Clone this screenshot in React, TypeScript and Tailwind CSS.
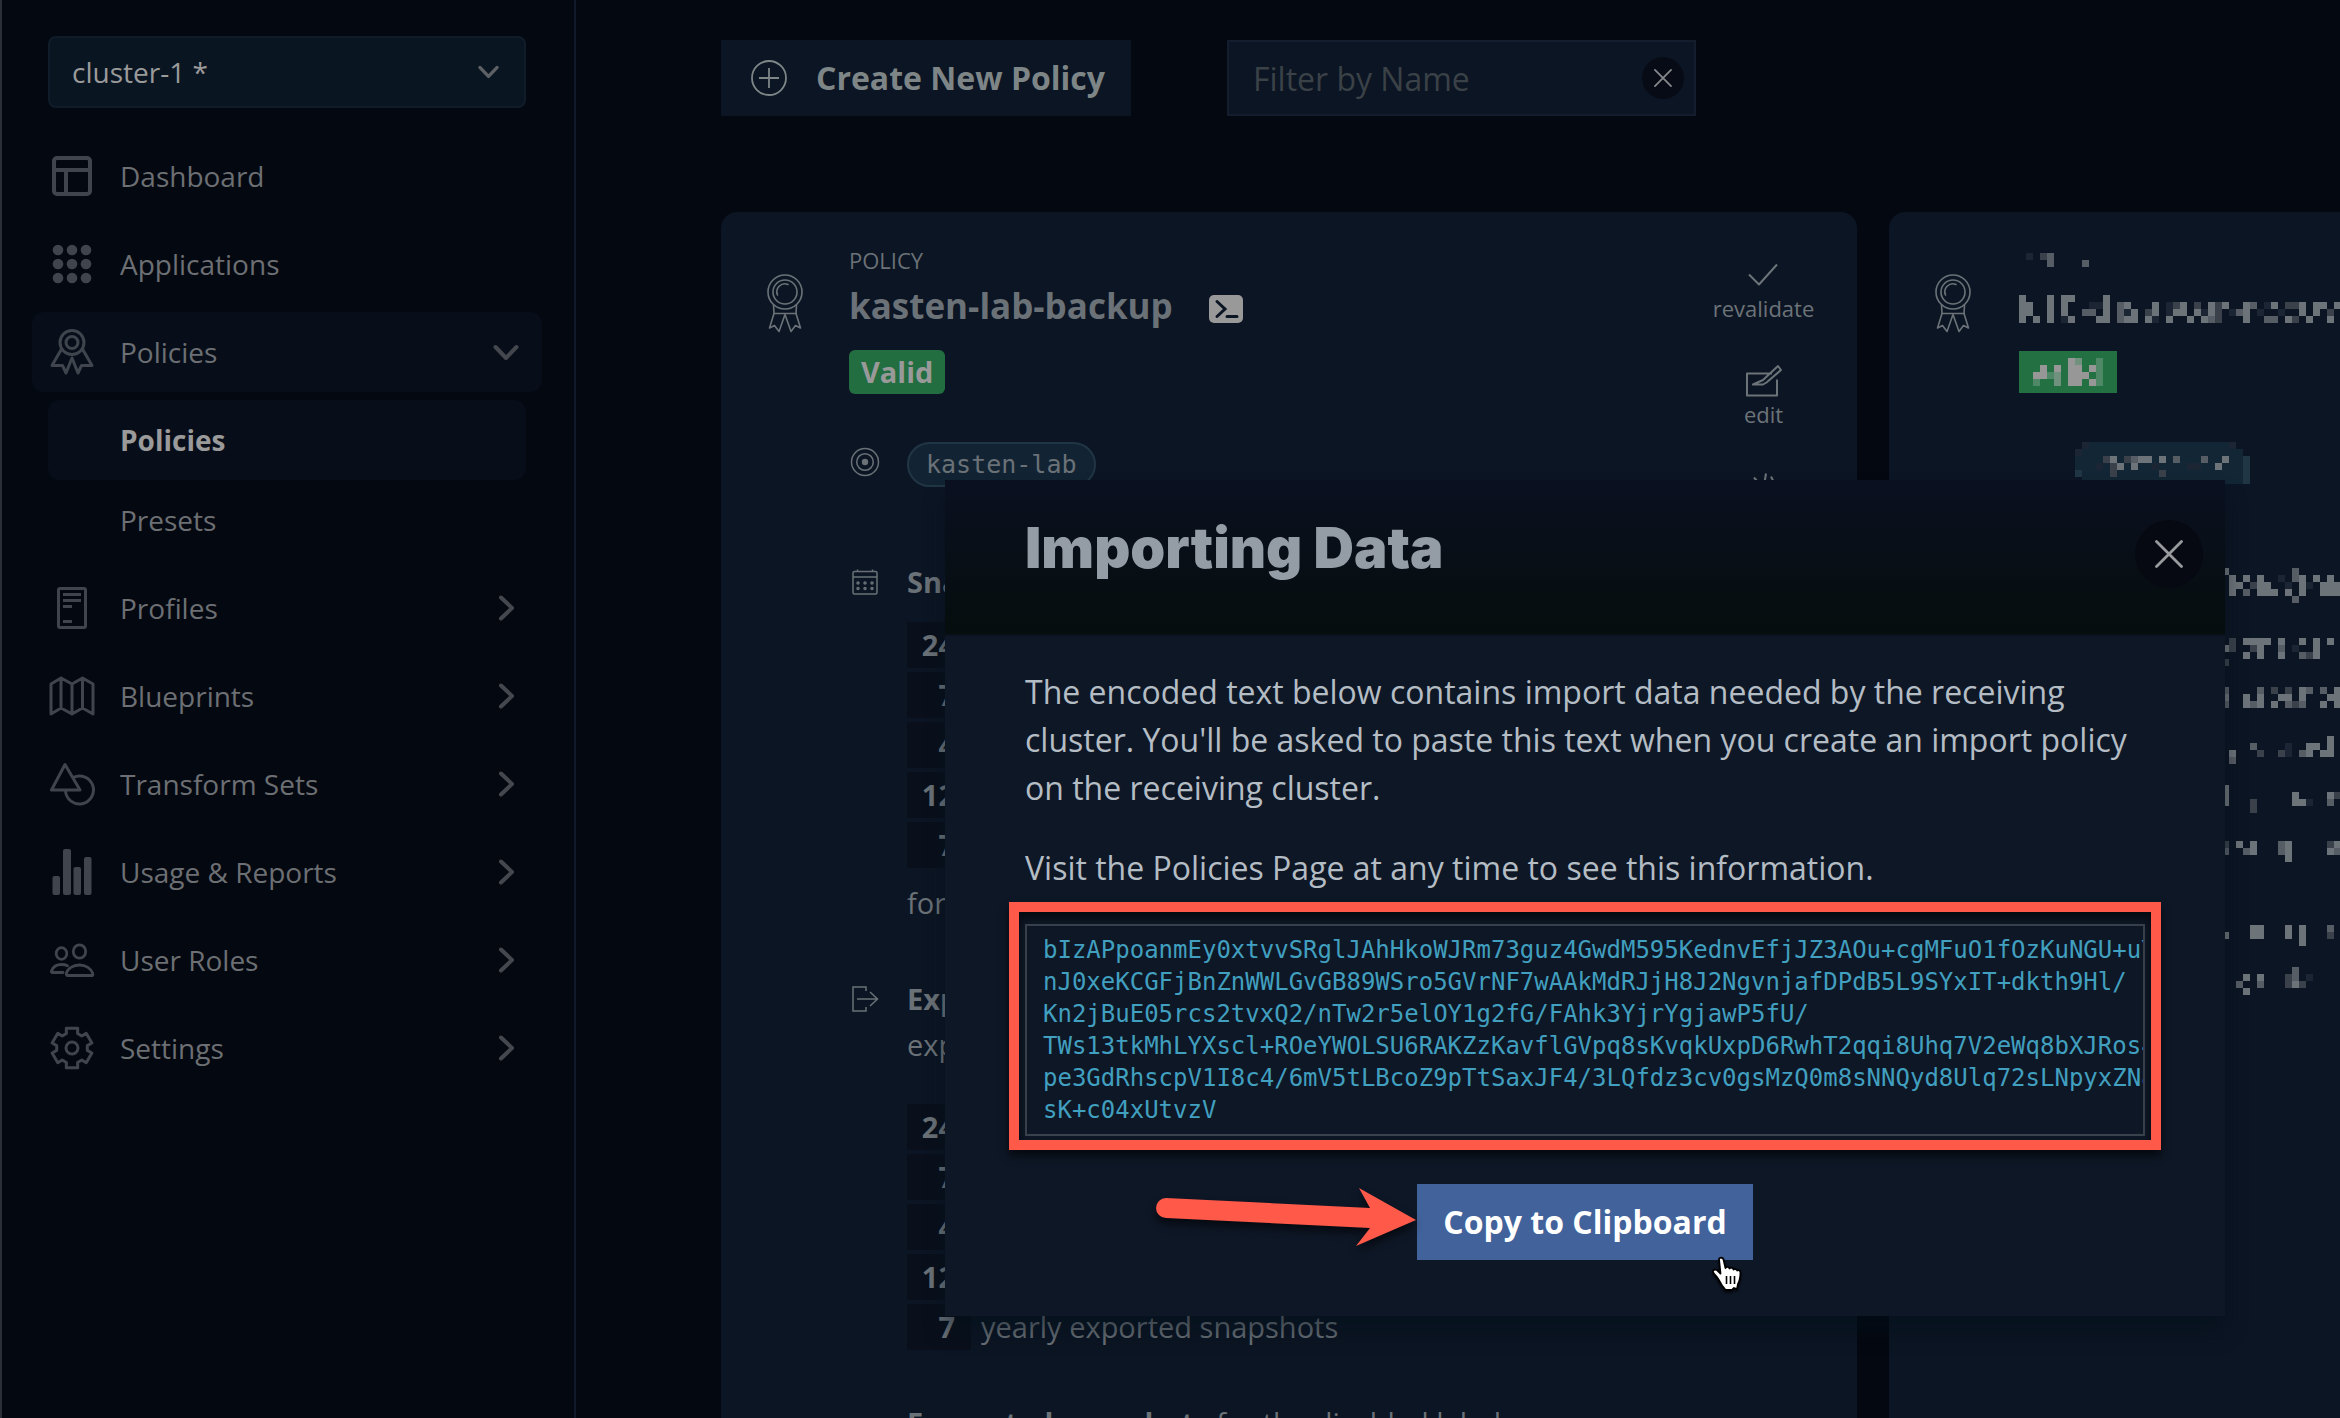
import React from "react";

type IconProps = { className?: string };

const stroke = {
  fill: "none",
  stroke: "currentColor",
  strokeLinecap: "round" as const,
  strokeLinejoin: "round" as const,
};

function NavSvg({ children }: { children: React.ReactNode }) {
  return (
    <svg viewBox="0 0 48 48" className="size-12 shrink-0 text-[#40444c]" aria-hidden="true">
      {children}
    </svg>
  );
}

const DashboardIcon = () => (
  <NavSvg>
    <g {...stroke} strokeWidth="4">
      <rect x="6" y="6" width="36" height="36" rx="3" />
      <path d="M6 18h36M18 18v24" />
    </g>
  </NavSvg>
);

const ApplicationsIcon = () => (
  <NavSvg>
    {[10, 24, 38].map((y) =>
      [10, 24, 38].map((x) => <circle key={`${x}-${y}`} cx={x} cy={y} r="5.3" fill="currentColor" />),
    )}
  </NavSvg>
);

const PoliciesIcon = () => (
  <NavSvg>
    <g {...stroke} strokeWidth="3">
      <circle cx="24" cy="14.5" r="12" />
      <circle cx="24" cy="14.5" r="6" />
      <path d="M13 22 4 37.5h10.5L18 45l6-15 6 15 3.500-7.500H44L35 22" />
    </g>
  </NavSvg>
);

const ProfilesIcon = () => (
  <NavSvg>
    <rect x="10.5" y="4.500" width="27" height="39" rx="1.500" {...stroke} strokeWidth="3" />
    <path d="M15 10.500h18M15 16.500h18M15 22.500h9M15 37.500h9" fill="none" stroke="currentColor" strokeWidth="3" />
  </NavSvg>
);

const BlueprintsIcon = () => (
  <NavSvg>
    <path
      d="M3 12 13 6l11 6 10.500-6L45 12v30l-10.500-6L24 42l-11-6-10 6zM13 6v30M24 12v30M34.500 6v30"
      {...stroke}
      strokeWidth="3"
    />
  </NavSvg>
);

const TransformIcon = () => (
  <NavSvg>
    <path d="M17 4.500 3.500 30H32zM25.500 17.300A14 14 0 1 1 17.500 31" {...stroke} strokeWidth="3" />
  </NavSvg>
);

const ReportsIcon = () => (
  <NavSvg>
    <g fill="currentColor">
      <rect x="4.500" y="28" width="7.500" height="19" rx="2" />
      <rect x="15" y="1" width="8" height="46" rx="2" />
      <rect x="25.500" y="19" width="7.500" height="28" rx="2" />
      <rect x="36" y="9" width="7.500" height="38" rx="2" />
    </g>
  </NavSvg>
);

const RolesIcon = () => (
  <NavSvg>
    <g {...stroke} strokeWidth="2.800">
      <ellipse cx="13.500" cy="17.500" rx="5.300" ry="5.800" />
      <ellipse cx="31.500" cy="15.500" rx="6.200" ry="6.700" />
      <path d="M19 39.500h25.500q.8-.5.300-2c-1.600-5-7-8.500-13.300-8.500s-12 3.500-13.200 8.500q-.3 1.500.7 2zM15 36.500H4q-1-.3-.4-1.800c1.500-3.800 5.400-6.200 9.900-6.200q3.500 0 6 1.300" />
    </g>
  </NavSvg>
);

const gearPath =
  Array.from({ length: 6 }, (_, k) =>
    [
      [15.5, -21],
      [20.5, -16],
      [20.5, 16],
      [15.5, 21],
    ].map(([r, a]) => {
      const t = ((k * 60 - 90 + a) * Math.PI) / 180;
      return `${(24 + r * Math.cos(t)).toFixed(1)} ${(24 + r * Math.sin(t)).toFixed(1)}`;
    }),
  )
    .flat()
    .reduce((d, p, i) => d + (i ? "L" : "M") + p, "") + "Z";

const SettingsIcon = () => (
  <NavSvg>
    <g {...stroke} strokeWidth="3">
      <path d={gearPath} />
      <circle cx="24" cy="24" r="6" />
    </g>
  </NavSvg>
);

const ChevronDown = ({ className }: IconProps) => (
  <svg viewBox="0 0 28 28" className={className} aria-hidden="true">
    <path d="M3.500 9 14 20 24.500 9" {...stroke} strokeWidth="4" />
  </svg>
);

const ChevronRight = ({ className }: IconProps) => (
  <svg viewBox="0 0 28 28" className={className} aria-hidden="true">
    <path d="M9 3.500 20 14 9 24.500" {...stroke} strokeWidth="4" />
  </svg>
);

const CloseIcon = ({ className }: IconProps) => (
  <svg viewBox="0 0 28 28" className={className} aria-hidden="true">
    <path d="M1.500 1.500 26.500 26.500M26.500 1.500 1.500 26.500" {...stroke} strokeWidth="2.800" />
  </svg>
);

const RibbonIcon = () => (
  <svg viewBox="0 0 36 60" className="h-[60px] w-9 text-[#6b7379]" aria-hidden="true">
    <g {...stroke} strokeWidth="1.600">
      <circle cx="18" cy="18" r="17" />
      <circle cx="18" cy="18" r="12" />
      <path d="M21 10.500A8 8 0 0 0 10.500 21M6.500 31 7 39.500h22l.5-8.500" />
      <path d="M7 39.500 2.500 54l5-2.500 4.500 6L18 40.500l6 17 4.500-6 5 2.500L29 39.500" />
    </g>
  </svg>
);

const nav = [
  { label: "Dashboard", icon: DashboardIcon },
  { label: "Applications", icon: ApplicationsIcon },
  { label: "Policies", icon: PoliciesIcon, open: true, children: ["Policies", "Presets"] },
  { label: "Profiles", icon: ProfilesIcon, more: true },
  { label: "Blueprints", icon: BlueprintsIcon, more: true },
  { label: "Transform Sets", icon: TransformIcon, more: true },
  { label: "Usage & Reports", icon: ReportsIcon, more: true },
  { label: "User Roles", icon: RolesIcon, more: true },
  { label: "Settings", icon: SettingsIcon, more: true },
];

function Sidebar() {
  return (
    <aside className="w-[576px] shrink-0 border-r-2 border-l-2 border-r-[#10182a] border-l-[#2b3038] py-9 pr-8 pl-[30px]">
      <div className="relative mx-4">
        <select
          aria-label="Cluster"
          className="h-[72px] w-full appearance-none rounded-lg border-2 border-[#111c2b] bg-[#0a1522] px-[22px] text-[28px] text-[#9a9a9a]"
        >
          <option>cluster-1 *</option>
        </select>
        <ChevronDown className="pointer-events-none absolute top-6 right-[26px] size-[23px] text-[#5d6166]" />
      </div>
      <nav className="mt-7">
        <ul className="flex flex-col gap-2 text-[28px] text-[#6c6f73]">
          {nav.map(({ label, icon: Icon, open, more, children }) => (
            <li key={label}>
              <a
                href="#"
                className={`flex h-20 items-center gap-6 rounded-xl px-4 ${open ? "bg-[#070e19]" : ""}`}
              >
                <Icon />
                <span className="grow">{label}</span>
                {open && <ChevronDown className="mr-1.5 size-7 text-[#44484e]" />}
                {more && <ChevronRight className="mr-1.5 size-7 text-[#44484e]" />}
              </a>
              {children && (
                <ul className="mx-4 mt-2">
                  {children.map((child, i) => (
                    <li key={child}>
                      <a
                        href="#"
                        className={`flex h-20 items-center rounded-xl pl-[72px] ${
                          i === 0 ? "bg-[#070e19] font-bold text-[#9a9a9a]" : ""
                        }`}
                      >
                        {child}
                      </a>
                    </li>
                  ))}
                </ul>
              )}
            </li>
          ))}
        </ul>
      </nav>
    </aside>
  );
}

function CountRows({ rows }: { rows: [number, string][] }) {
  return (
    <ul className="flex flex-col gap-1">
      {rows.map(([count, label]) => (
        <li key={label} className="flex h-[46px] items-center gap-2.5">
          <span className="flex h-full w-16 items-center justify-end bg-[#09101b] pr-4 font-bold">
            {count}
          </span>
          <span>{label}</span>
        </li>
      ))}
    </ul>
  );
}

const retention = (kind: string): [number, string][] => [
  [24, `hourly ${kind}`],
  [7, `daily ${kind}`],
  [4, `weekly ${kind}`],
  [12, `monthly ${kind}`],
  [7, `yearly ${kind}`],
];

function ActionButton({ label, children }: { label: string; children: React.ReactNode }) {
  return (
    <button type="button" className="flex flex-col items-center text-[22px] leading-[30px] text-[#6c7379]">
      <svg viewBox="0 0 36 36" className="h-[37px] w-9" aria-hidden="true">
        <g {...stroke} strokeLinecap="butt" strokeWidth="2">
          {children}
        </g>
      </svg>
      {label}
    </button>
  );
}

function PolicyCard() {
  return (
    <article className="flex w-[1136px] shrink-0 rounded-t-2xl bg-[#0c1523] text-[29px] leading-10 text-[#6a7177]">
      <div className="w-32 shrink-0 pt-[62px] pl-[46px]">
        <RibbonIcon />
      </div>
      <div className="grow pt-8">
        <p className="text-[22px] leading-8">POLICY</p>
        <h2 className="mt-1.5 flex items-center gap-9 text-[35px] leading-[48px] font-bold">
          kasten-lab-backup
          <svg viewBox="0 0 34 28" className="mt-1.5 h-7 w-[34px]" aria-hidden="true">
            <rect width="34" height="28" rx="5" fill="#999999" />
            <path d="m8 6.500 8 7.500-8 7.500M18 21.500h10" fill="none" stroke="#0c1523" strokeWidth="3" strokeLinecap="round" />
          </svg>
        </h2>
        <span className="mt-5 flex h-11 w-fit items-center rounded-md bg-[#226e41] px-3 font-bold text-[#999999]">
          Valid
        </span>

        <div className="mt-12 flex gap-[26px]">
          <svg viewBox="0 0 32 32" className="mt-1 size-8" aria-hidden="true">
            <g fill="none" stroke="currentColor" strokeWidth="1.500">
              <circle cx="16" cy="16" r="13.500" />
              <circle cx="16" cy="16" r="8.300" />
            </g>
            <circle cx="16" cy="16" r="3.200" fill="currentColor" />
          </svg>
          <span className="flex h-[45px] items-center rounded-full border-2 border-[#213645] bg-[#122433] px-[17px] font-['DejaVu_Sans_Mono',monospace] text-[25px]">
            kasten-lab
          </span>
        </div>

        <section className="mt-[75px] flex gap-[26px]">
          <svg viewBox="0 0 32 32" className="mt-1 size-8 shrink-0" aria-hidden="true">
            <g fill="none" stroke="currentColor" strokeWidth="1.500">
              <rect x="4" y="5.500" width="24" height="22.500" rx="1.500" />
              <path d="M4 11h24M8.500 5.500v-2M23.500 5.500v-2" />
              {[17, 22.5].map((y) =>
                [9, 16, 23].map((x) => <circle key={`${x}-${y}`} cx={x} cy={y} r="1" />),
              )}
            </g>
          </svg>
          <div>
            <h3 className="mb-5 font-bold">Snapshot</h3>
            <CountRows rows={retention("snapshots")} />
            <p className="mt-[15px]">for all resources</p>
          </div>
        </section>

        <section className="mt-14 flex gap-[26px]">
          <svg viewBox="0 0 32 32" className="mt-1 size-8 shrink-0" aria-hidden="true">
            <path
              d="M17 8V4H4v24h13v-4M8 16h20M21 9l7.500 7L21 23"
              fill="none"
              stroke="currentColor"
              strokeWidth="1.500"
            />
          </svg>
          <div>
            <h3 className="font-bold">Export</h3>
            <p className="mt-1.5 mb-[39px]">exported snapshots</p>
            <CountRows rows={retention("exported snapshots")} />
            <p className="mt-[53px]">
              <b>Encrypted snapshots</b> for the disabled label
            </p>
          </div>
        </section>
      </div>
      <div className="flex w-[187px] shrink-0 flex-col items-center gap-[39px] pt-11">
        <ActionButton label="revalidate">
          <path d="m4 18 10 10L32 8" />
        </ActionButton>
        <ActionButton label="edit">
          <path d="M26 11H1v22h30V17M7 22h10l3.500-2L35 7.500l-3-4-15 14z" />
        </ActionButton>
        <ActionButton label="run once">
          <path d="m8 9 5 6M20 5l-1.500 9M25 8l3 6M8 20l4 12h12l4-12" />
        </ActionButton>
      </div>
    </article>
  );
}

const shades: Record<string, string> = {
  "#": "#6d7479",
  "+": "#575d65",
  "-": "#3a414b",
  ".": "#1b2533",
  c: "#132635",
  s: "#213645",
  g: "#237042",
  W: "#979797",
  m: "#71917f",
  d: "#4f8867",
};

/* Obscured content: [row, first column, one shade per cell; a space leaves the cell empty]. */
const obscured: [number, number, string][] = [
  [0, 1, ". -+"],
  [1, 4, "+    +"],
  [6, 0, "#   # ##    #"],
  [7, 0, "##  # #   ..# +#   # .-# - #-#  #+ .# --# ## #"],
  [8, 0, "##  # #  ++ # +.# -# .## #.#- .+# .  .  # # -"],
  [9, 0, "# # # .#   ## +## #. #  # #+-   #  ++ #- #  #"],
  [14, 0, "gggggggggggggg"],
  [15, 0, "gggggggWmggdgg"],
  [16, 0, "gggWgWgWWgWdgg"],
  [17, 0, "ggWWdmgWWWgdgg"],
  [18, 0, "ggdggmgWWgWdgg"],
  [19, 0, "gggggggggggggg"],
  [27, 9, ".cccccccccccccccccccc."],
  [28, 8, ".ccccccccccccccccccccccc"],
  [29, 8, "cccc-#c-+##c#c+ccc+cc#ccs"],
  [30, 8, "ccc.c-#c#cc.cccc..cc#cccs"],
  [31, 8, "scccc-cccccc-cccccccccccs"],
  [32, 9, "cccccccccccccccccccccccs"],
  [45, 29, "#         +"],
  [46, 30, "# # #  . +# # #"],
  [47, 30, "## -##  . #. ###"],
  [48, 30, "# + ### # #  ###"],
  [49, 39, "+"],
  [55, 30, "- #### #  # # #"],
  [56, 29, "#-  -#  + .  #"],
  [57, 32, "# #  #  +-#"],
  [58, 29, "-"],
  [62, 29, "+    + - - #+ + #"],
  [63, 29, "#  # #  ## #   ##"],
  [64, 29, "+  #+# # +-+  # #"],
  [69, 44, "#"],
  [70, 33, "+    .  ## #"],
  [71, 30, "#   -  -. +# ##"],
  [72, 30, "+"],
  [76, 29, "#"],
  [77, 29, "#         #    #-"],
  [78, 29, "#   -     ##.  +"],
  [79, 33, "-"],
  [84, 29, "- # #   +#     -#"],
  [85, 29, "+  +#   +#     #+"],
  [86, 38, "#"],
  [96, 33, "##   # #   +"],
  [97, 29, "#   ##   # #   -"],
  [98, 40, "#"],
  [102, 39, "+"],
  [103, 32, "# #   -+ ."],
  [104, 31, "+  +   -#-"],
  [105, 32, "#"],
];

function ObscuredContent() {
  return (
    <svg viewBox="0 0 322 742" className="mt-[41px] h-[742px] w-[322px] shrink-0" shapeRendering="crispEdges" aria-hidden="true">
      {obscured.map(([row, col, cells]) =>
        cells.split("").map((cell, i) =>
          cell === " " ? null : (
            <rect key={`${row}-${col + i}`} x={(col + i) * 7} y={row * 7} width="7" height="7" fill={shades[cell]} />
          ),
        ),
      )}
    </svg>
  );
}

const encoded = [
  "bIzAPpoanmEy0xtvvSRglJAhHkoWJRm73guz4GwdM595KednvEfjJZ3AOu+cgMFuO1fOzKuNGU+uY",
  "nJ0xeKCGFjBnZnWWLGvGB89WSro5GVrNF7wAAkMdRJjH8J2NgvnjafDPdB5L9SYxIT+dkth9Hl/",
  "Kn2jBuE05rcs2tvxQ2/nTw2r5elOY1g2fG/FAhk3YjrYgjawP5fU/",
  "TWs13tkMhLYXscl+ROeYWOLSU6RAKZzKavflGVpq8sKvqkUxpD6RwhT2qqi8Uhq7V2eWq8bXJRos4",
  "pe3GdRhscpV1I8c4/6mV5tLBcoZ9pTtSaxJF4/3LQfdz3cv0gsMzQ0m8sNNQyd8Ulq72sLNpyxZN8",
  "sK+c04xUtvzV",
].join("\n");

function ImportDialog() {
  return (
    <div
      role="dialog"
      aria-labelledby="dialog-title"
      className="absolute top-[480px] left-[945px] w-[1280px] bg-[#0e1726] shadow-[0_16px_20px_rgba(3,16,26,0.45)]"
    >
      <header className="flex h-[156px] items-start justify-between border-b-2 border-[#0a111c] bg-linear-to-b from-[#0a1020] to-[#060d0d] pr-[22px] pl-20">
        <h1 id="dialog-title" className="pt-9 font-['Inter',sans-serif] text-[56px] leading-[64px] font-black text-[#949ca6]">
          Importing Data
        </h1>
        <button
          type="button"
          aria-label="Close"
          className="mt-10 flex size-[68px] items-center justify-center rounded-full bg-[#060911] text-[#999b9e]"
        >
          <CloseIcon className="size-7" />
        </button>
      </header>
      <div className="flex flex-col gap-8 px-20 pt-8 pb-14 text-[32px] leading-[48px] text-[#b4bcc4]">
        <p>
          The encoded text below contains import data needed by the receiving cluster. You'll be asked to paste this
          text when you create an import policy on the receiving cluster.
        </p>
        <p>Visit the Policies Page at any time to see this information.</p>
        <div className="relative">
          <textarea
            aria-label="Encoded import data"
            readOnly
            wrap="off"
            value={encoded}
            className="block h-[212px] w-full resize-none overflow-hidden border-2 border-[#3a424d] bg-[#0e1726] py-2 pr-0 pl-4 font-['DejaVu_Sans_Mono',monospace] text-[24px] leading-8 text-[#419fbf]"
          />
          <div className="pointer-events-none absolute -inset-x-4 -top-[22px] -bottom-3.5 border-[10px] border-[#ff594a] shadow-[0_6px_8px_rgba(0,0,0,0.6),inset_0_6px_8px_rgba(0,0,0,0.6)]" />
        </div>
        <div className="relative mx-auto mt-4">
          <button type="button" className="h-[76px] bg-[#41629a] px-[26px] font-bold text-white">
            Copy to Clipboard
          </button>
          <svg
            viewBox="0 0 264 72"
            className="pointer-events-none absolute top-0 -left-[264px] h-[72px] w-[264px] overflow-visible drop-shadow-[0_5px_4px_rgba(0,0,0,0.6)]"
            aria-hidden="true"
          >
            <path d="M13 14 217 24 206 4l57 32-60 26 14-18L13 34a10 10 0 0 1 0-20z" fill="#ff594a" />
          </svg>
          <svg
            viewBox="0 0 32 36"
            className="pointer-events-none absolute top-[72px] right-2.5 h-9 w-8 drop-shadow-[0_2px_1px_rgba(0,0,0,0.6)]"
            aria-hidden="true"
          >
            <path
              d="M8 3c1-2 4-1.500 4.500.5l2 8.500c.5-1.500 3.500-1.500 4 .5.800-1.300 3.600-1 4 1 1-1 3.200-.500 3.700 1 1.300-1 3.300 0 3.300 2-.1 5-.500 8-2.500 11.500L26 33l-3-1-2 2h-6.500c-3-3-5.500-7.500-7-10.500C6 20.500 2.500 18 2 16c-.5-2 2-3 4-2l3.500 3.500z"
              fill="#fff"
              stroke="#000"
              strokeWidth="1.800"
              strokeLinejoin="round"
            />
            <path d="M15.500 20v8M19.500 20v8M23.500 20v8" fill="none" stroke="#000" strokeWidth="1.600" />
          </svg>
        </div>
      </div>
    </div>
  );
}

export default function App() {
  return (
    <div className="relative flex h-screen overflow-hidden bg-[#040810] font-['Open_Sans',sans-serif]">
      <Sidebar />
      <main className="min-w-0 grow overflow-hidden pt-10 pl-[145px]">
        <div className="flex gap-24">
          <button
            type="button"
            className="flex h-[76px] items-center gap-[29px] bg-[#0c1523] pr-[26px] pl-[30px] text-[32px] font-bold text-[#7e8587]"
          >
            <svg viewBox="0 0 36 36" className="size-9" aria-hidden="true">
              <g fill="none" stroke="currentColor" strokeWidth="1.800">
                <circle cx="18" cy="18" r="17" />
                <path d="M18 8v20M8 18h20" />
              </g>
            </svg>
            Create New Policy
          </button>
          <div className="relative">
            <input
              type="text"
              aria-label="Filter by Name"
              placeholder="Filter by Name"
              className="h-[76px] w-[469px] border-2 border-[#131d2e] bg-[#0c1523] px-6 text-[32px] text-[#7e8587] placeholder:text-[#3a4147]"
            />
            <button
              type="button"
              aria-label="Clear filter"
              className="absolute top-[17px] right-3 flex size-[42px] items-center justify-center rounded-full bg-[#070b16] text-[#85888b]"
            >
              <CloseIcon className="size-[18px]" />
            </button>
          </div>
        </div>
        <div className="mt-24 flex gap-8">
          <PolicyCard />
          <article className="flex w-[1136px] shrink-0 rounded-t-2xl bg-[#0c1523]">
            <div className="w-[130px] shrink-0 pt-[62px] pl-[46px]">
              <RibbonIcon />
            </div>
            <ObscuredContent />
          </article>
        </div>
      </main>
      <ImportDialog />
    </div>
  );
}
